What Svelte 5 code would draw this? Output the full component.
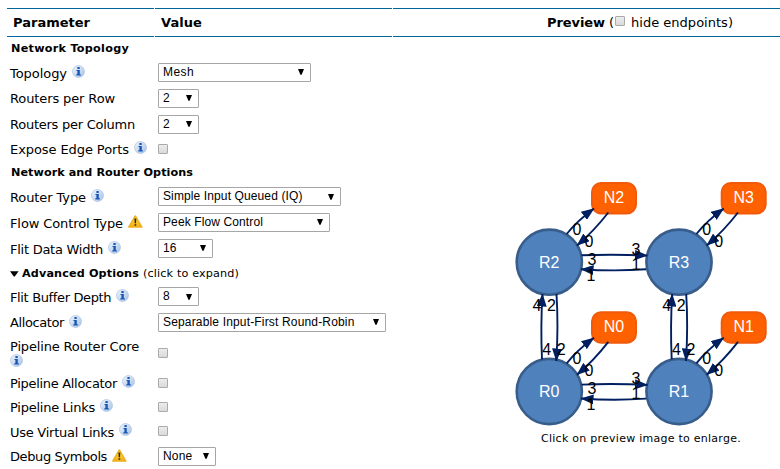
<script>
  const rows = [
    { h: 23, head: 'Network Topology', w: 118 },
    { h: 26, label: 'Topology', w: 57, icon: 'info', low: true, select: 'Mesh', tw: 31, sw: 153 },
    { h: 26, label: 'Routers per Row', w: 105, select: '2', tw: 7, sw: 41 },
    { h: 26, label: 'Routers per Column', w: 125, select: '2', tw: 7, sw: 41 },
    { h: 23, label: 'Expose Edge Ports', w: 119, icon: 'info' },
    { h: 24, head: 'Network and Router Options', w: 182 },
    { h: 25, label: 'Router Type', w: 76, icon: 'info', select: 'Simple Input Queued (IQ)', tw: 139.5, sw: 183 },
    { h: 26, label: 'Flow Control Type', w: 113, icon: 'warn', low: true, select: 'Peek Flow Control', tw: 100, sw: 172 },
    { h: 26, label: 'Flit Data Width', w: 93, icon: 'info', low: true, select: '16', tw: 13.5, sw: 55 },
    { h: 23, head: 'Advanced Options', note: '(click to expand)', w: 117 },
    { h: 25, label: 'Flit Buffer Depth', w: 101, icon: 'info', select: '8', tw: 7, sw: 41 },
    { h: 26, label: 'Allocator', w: 54, icon: 'info', select: 'Separable Input-First Round-Robin', tw: 191.5, sw: 228 },
    { h: 35, label: 'Pipeline Router Core', w: 129, icon: 'info', wrap: true },
    { h: 24, label: 'Pipeline Allocator', w: 107, icon: 'info', low: true },
    { h: 24, label: 'Pipeline Links', w: 85, icon: 'info', low: true },
    { h: 25, label: 'Use Virtual Links', w: 104, icon: 'info', low: true },
    { h: 26, label: 'Debug Symbols', w: 97, icon: 'warn', select: 'None', tw: 29.5, sw: 58 }
  ];

  function fit(node, width) {
    const n = node.textContent.length;
    const natural = node.getBoundingClientRect().width;
    node.style.letterSpacing = `${(width - natural) / n}px`;
  }

  const cells = [
    { x: 0, y: 0, r: 'R2', n: 'N2' },
    { x: 129.7, y: 0, r: 'R3', n: 'N3' },
    { x: 0, y: 129.3, r: 'R0', n: 'N0' },
    { x: 129.7, y: 129.3, r: 'R1', n: 'N1' }
  ];
</script>

{#snippet icon(kind)}
  {#if kind === 'info'}
    <svg class="info" width="13" height="13" viewBox="0 0 13 13">
      <defs>
        <linearGradient id="blue" x1="0" y1="0" x2="1" y2="1">
          <stop offset="0" stop-color="#f2f7fd" />
          <stop offset="1" stop-color="#a3c0e6" />
        </linearGradient>
      </defs>
      <circle cx="6.5" cy="6.5" r="6" fill="url(#blue)" stroke="#b4c8e2" stroke-width=".8" />
      <path d="M5.4 2h2.3v1.9H5.4zM4.5 4.9h3.3v4.3h1v1.2H4.3V9.2h1.1V6.1h-.9z" fill="#1a56b4" />
    </svg>
  {:else}
    <svg class="warn" width="15" height="13" viewBox="0 0 15 13">
      <defs>
        <linearGradient id="gold" x1="0" y1="0" x2="0" y2="1">
          <stop offset="0" stop-color="#ffe65c" />
          <stop offset="1" stop-color="#f5ab12" />
        </linearGradient>
      </defs>
      <path d="M7.3.9 13.9 12.1H.7z" fill="url(#gold)" stroke="#eeb01c" stroke-width="1.4" stroke-linejoin="round" />
      <path d="M6.4 3.6h1.9L8 8.3H6.7zM6.5 9.2h1.7v1.6H6.5z" fill="#2c2408" />
    </svg>
  {/if}
{/snippet}

<main>
  <header>
    <div class="c1"><b use:fit={77}>Parameter</b></div>
    <div class="c2"><b use:fit={41}>Value</b></div>
    <div class="c3"><b use:fit={58}>Preview</b><span class="paren">(</span><i class="box"></i><span class="hide" use:fit={102}>hide endpoints)</span></div>
  </header>
  <div class="body">
    <div class="form">
      {#each rows as r}
        <div class="row" style="height: {r.h}px">
          {#if r.head}
            {#if r.note}<svg class="tri" width="9" height="6" viewBox="0 0 9 6"><path d="M0 .3h8.6L4.8 5.4h-1z" fill="#000" /></svg>{/if}
            <b class="head" use:fit={r.w}>{r.head}</b>
            {#if r.note}<span class="note" use:fit={96}>{r.note}</span>{/if}
          {:else}
            <div class="label" class:wrap={r.wrap} class:low={r.low}>
              <span use:fit={r.w}>{r.label}</span>
              {#if r.icon}{@render icon(r.icon)}{/if}
            </div>
            {#if r.select}
              <div class="select" style="width: {r.sw}px">
                <span use:fit={r.tw}>{r.select}</span>
                <svg width="6" height="6" viewBox="0 0 6 6"><path d="M0 0h6L3.6 5.8H2.4z" fill="#000" /></svg>
              </div>
            {:else}
              <i class="box"></i>
            {/if}
          {/if}
        </div>
      {/each}
    </div>
    <div class="preview">
      <svg class="graph" width="270" height="252" viewBox="510 177 270 252">
        <defs>
          <marker id="tip" viewBox="0 0 13 10" refX="12.5" refY="5" markerWidth="13" markerHeight="10" markerUnits="userSpaceOnUse" orient="auto">
            <path d="M0 0 13 5 0 10z" fill="#001f60" />
          </marker>
        </defs>
        {#each cells as c}
          <g transform="translate({c.x} {c.y})">
            <circle cx="549.3" cy="262.2" r="32.6" fill="#4f81bd" stroke="#385d8a" stroke-width="2.6" />
            <rect x="592" y="183" width="44" height="30.4" rx="9" fill="#ff6000" stroke="#f05a0a" stroke-width="2" />
            <text class="name" x="549.3" y="267.6">{c.r}</text>
            <text class="name" x="614" y="203">{c.n}</text>
          </g>
        {/each}
        {#each cells as c}
          <g class="edges" transform="translate({c.x} {c.y})">
            <path d="M566.7 234Q577 221 594 208.5" />
            <path d="M608.3 212.5Q594 231 577 245.5" />
          </g>
        {/each}
        {#each [0, 129.3] as y}
          <g class="edges" transform="translate(0 {y})">
            <path d="M581.5 255.3Q614 254 647.5 255.6" />
            <path d="M646 269.3Q614 271.5 581 269.2" />
          </g>
        {/each}
        {#each [0, 129.7] as x}
          <g class="edges" transform="translate({x} 0)">
            <path d="M542 359.5Q540.5 326 542.5 294" />
            <path d="M556.5 294Q558.5 326 556.3 361" />
          </g>
        {/each}
        {#each cells as c}
          <g class="port" transform="translate({c.x} {c.y})">
            <text x="577" y="235.2">0</text>
            <text x="589" y="246.8">0</text>
          </g>
        {/each}
        {#each [0, 129.3] as y}
          <g class="port" transform="translate(0 {y})">
            <text x="592" y="265.2">3</text>
            <text x="591" y="281">1</text>
            <text x="636" y="254.8">3</text>
            <text x="636" y="270.2">1</text>
          </g>
        {/each}
        {#each [0, 129.7] as x}
          <g class="port" transform="translate({x} 0)">
            <text x="537" y="310.5">4</text>
            <text x="551.5" y="310.5">2</text>
            <text x="546.7" y="354.5">4</text>
            <text x="561.3" y="354.5">2</text>
          </g>
        {/each}
      </svg>
      <p><span use:fit={200}>Click on preview image to enlarge.</span></p>
    </div>
  </div>
</main>

<style>
  :global(body) { margin: 0; background: #fff; }
  main {
    width: 780px; height: 469px; overflow: hidden; box-sizing: border-box;
    padding: 8px 0 0 7px; background: #fff; color: #000;
    font: 13px/16px "DejaVu Sans", Verdana, sans-serif;
  }
  span, b { white-space: nowrap; }
  header { display: flex; gap: 1px; height: 29px; }
  header div {
    box-sizing: border-box; flex: none; display: flex; align-items: center;
    border-top: 1px solid #069; border-bottom: 1px solid #069; padding-left: 6px;
  }
  .c1 { width: 147px; }
  .c2 { width: 237px; }
  header .c3 { width: 494px; padding-left: 154px; }
  .paren { margin-left: 4px; width: 6px; }
  .hide { margin-left: 6px; }
  .body { display: flex; }
  .form { width: 503px; flex: none; }
  .row { display: flex; align-items: center; padding-left: 3px; box-sizing: border-box; }
  .head { font-size: 11.2px; margin-left: 1px; }
  .tri + .head { margin-left: 3px; }
  .note { font-size: 11.2px; margin-left: 4px; }
  .label { width: 148px; flex: none; display: flex; align-items: center; gap: 5px; }
  .label svg { position: relative; top: -2px; }
  .label.low { padding-top: 2px; }
  .label.low svg { top: -3px; }
  .label.wrap { flex-direction: column; align-items: flex-start; gap: 0; }
  .label.wrap svg { top: -1px; }
  .select {
    box-sizing: border-box; height: 19px; flex: none; border: 1px solid #a6a6a6; border-radius: 1px;
    display: flex; align-items: center; justify-content: space-between; margin-bottom: 2px;
    padding: 0 6px 0 4px; font: 12px/17px "Liberation Sans", Arial, sans-serif;
  }
  .box {
    display: block; width: 10px; height: 10px; box-sizing: border-box; flex: none; margin-bottom: 1px;
    border: 1px solid #aaa; border-radius: 1px; background: linear-gradient(#ececec, #dadada);
  }
  .c3 .box { margin-bottom: 3px; }
  .preview { padding-top: 140px; }
  .graph { display: block; }
  .edges { fill: none; stroke: #001f60; stroke-width: 1.9; }
  .edges path { marker-end: url(#tip); }
  text { font: 16px "Liberation Sans", Arial, sans-serif; text-anchor: middle; }
  .name { fill: #fff; }
  p { margin: 2px 0 0 31px; font-size: 11px; line-height: 16px; }
</style>
